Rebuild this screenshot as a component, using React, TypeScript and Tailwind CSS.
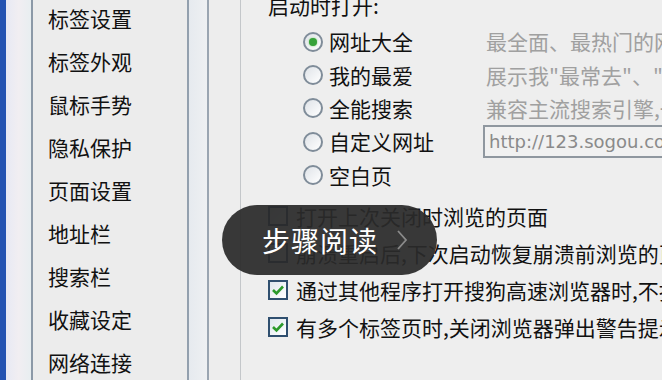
import React from 'react';

const navItems = ['标签设置', '标签外观', '鼠标手势', '隐私保护', '页面设置', '地址栏', '搜索栏', '收藏设定', '网络连接'];

const radios = [
  { label: '网址大全', desc: '最全面、最热门的网址导航', checked: true },
  { label: '我的最爱', desc: '展示我"最常去"、"最喜欢"的网站' },
  { label: '全能搜索', desc: '兼容主流搜索引擎,一键搜索' },
  { label: '自定义网址', input: 'http://123.sogou.com/' },
  { label: '空白页' },
];

const checks = [
  { label: '打开上次关闭时浏览的页面', checked: false },
  { label: '崩溃重启后,下次启动恢复崩溃前浏览的页面', checked: false },
  { label: '通过其他程序打开搜狗高速浏览器时,不打开主页', checked: true },
  { label: '有多个标签页时,关闭浏览器弹出警告提示', checked: true },
];

function Radio({ checked }: { checked?: boolean }) {
  return (
    <span className="flex h-[20px] w-[20px] shrink-0 items-center justify-center rounded-full border-[2px] border-[#7f8c99] bg-gradient-to-br from-[#dfe3e8] to-[#ffffff]">
      {checked && <span className="h-[8px] w-[8px] rounded-full bg-[#36a23a] shadow-[0_0_2px_#7ccf6f]" />}
    </span>
  );
}

function Check({ checked }: { checked?: boolean }) {
  return (
    <span className="flex h-[20px] w-[20px] shrink-0 items-center justify-center border-[2px] border-[#2f4f6f] bg-gradient-to-br from-[#dfe7ee] to-[#ffffff]">
      {checked && (
        <svg width="14" height="12" viewBox="0 0 14 12">
          <path d="M2 6 L5.5 9.5 L12 2.5" fill="none" stroke="#2c9a2c" strokeWidth="2.6" />
        </svg>
      )}
    </span>
  );
}

export default function App() {
  return (
    <div
      className="relative flex h-[380px] w-[665px] overflow-hidden bg-[#eeeeee] text-[21px] text-[#111111]"
      style={{ fontFamily: '"Noto Sans CJK SC", "DejaVu Sans", sans-serif' }}
    >
      <div className="w-[6px] shrink-0 bg-[#2453b2]" />
      <div className="w-[25px] shrink-0 bg-gradient-to-r from-[#e7e9f4] via-[#f1eef2] to-[#e8eef0]" />
      <div className="w-[2px] shrink-0 bg-[#8c99a7]" />

      {/* sidebar */}
      <div className="flex w-[154px] shrink-0 flex-col bg-[#ececec] pl-[15px]">
        <div className="-mt-[3px] flex flex-col">
          {navItems.map((item) => (
            <div key={item} className="flex h-[43px] items-center leading-none">
              {item}
            </div>
          ))}
        </div>
      </div>

      <div className="w-[2px] shrink-0 bg-[#93a0ae]" />
      <div className="w-[18px] shrink-0 bg-gradient-to-r from-[#e6eaef] to-[#eef0f2]" />
      <div className="w-[2px] shrink-0 bg-[#9aa5b1]" />
      <div className="w-[31px] shrink-0 bg-[#ededed]" />
      <div className="w-[1px] shrink-0 bg-[#c4c7ca]" />

      {/* content */}
      <div className="flex min-w-0 flex-1 flex-col pl-[27px]">
        <div className="-mt-[6px] flex h-[22px] items-center leading-none">启动时打开:</div>
        <div className="mt-[9px] flex flex-col">
          {radios.map((r) => (
            <div key={r.label} className="flex h-[33.4px] items-center">
              <div className="flex w-[215px] shrink-0 items-center gap-[6px] pl-[35px] leading-none">
                <Radio checked={r.checked} />
                <span>{r.label}</span>
              </div>
              {r.desc && <span className="whitespace-nowrap pl-[3px] leading-none text-[#a0a0a0]">{r.desc}</span>}
              {r.input && (
                <div className="flex h-[33px] w-[200px] shrink-0 items-center border-[2px] border-[#8f979f] bg-[#f1f1f1] pl-[4px] text-[18px] whitespace-nowrap text-[#8a8a8a]" style={{ fontFamily: '"DejaVu Sans", sans-serif' }}>
                  {r.input}
                </div>
              )}
            </div>
          ))}
        </div>
        <div className="mt-[6px] flex flex-col">
          {checks.map((c) => (
            <div key={c.label} className="flex h-[37px] items-center gap-[8px] whitespace-nowrap leading-none">
              <Check checked={c.checked} />
              <span>{c.label}</span>
            </div>
          ))}
        </div>
      </div>

      <div className="w-[3px] shrink-0 bg-[#ffffff]" />

      {/* step reading overlay */}
      <div className="absolute left-[222px] top-[205px] flex h-[70px] w-[215px] items-center rounded-full bg-[rgba(42,42,42,0.93)] pl-[40px]">
        <span className="text-[28px] leading-none tracking-[1px] text-white">步骤阅读</span>
        <svg className="ml-[18px]" width="12" height="22" viewBox="0 0 12 22">
          <path d="M2 2 L10 11 L2 20" fill="none" stroke="#8a8a8a" strokeWidth="1.8" />
        </svg>
      </div>
    </div>
  );
}
